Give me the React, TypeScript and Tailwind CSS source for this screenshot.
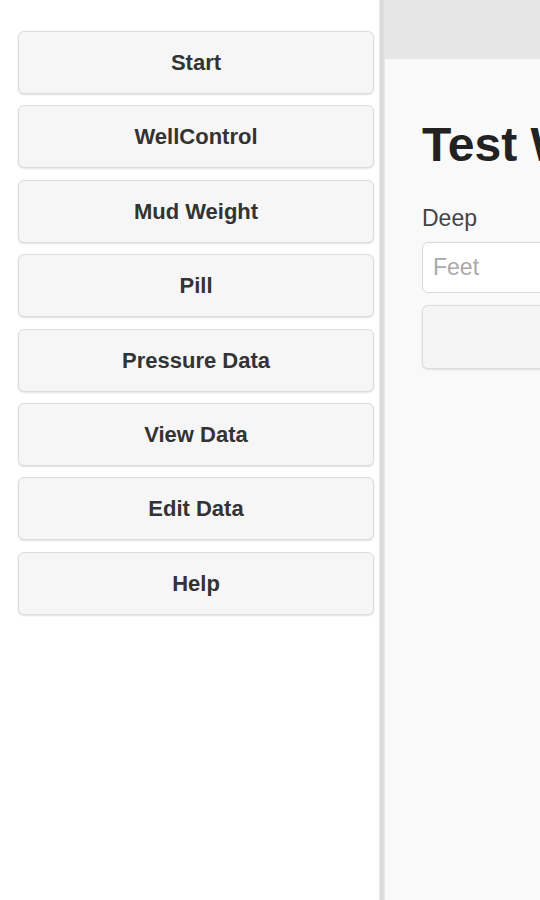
import React from 'react';

const menuItems = ['Start', 'WellControl', 'Mud Weight', 'Pill', 'Pressure Data', 'View Data', 'Edit Data', 'Help'];

export default function App() {
  return (
    <div className="flex h-[900px] w-[540px] overflow-hidden bg-white font-['Liberation_Sans',Arial,sans-serif]">
      {/* left menu */}
      <div className="w-[379px] shrink-0 bg-white pt-[31px] pl-[18px] pr-[5px]">
        <div className="flex flex-col gap-[11.4px]">
          {menuItems.map((item) => (
            <button
              key={item}
              className="h-[63px] w-full rounded-[6px] border border-[#dcdcdc] bg-[#f6f6f6] text-[22px] font-bold text-[#333] shadow-[0_1px_2px_rgba(0,0,0,0.12)]"
            >
              {item}
            </button>
          ))}
        </div>
      </div>

      {/* divider */}
      <div className="w-[6px] shrink-0 bg-gradient-to-r from-[#e8e8e8] via-[#d6d6d6] to-[#ececec]" />

      {/* right page */}
      <div className="flex min-w-0 flex-1 flex-col overflow-hidden bg-[#f9f9f9]">
        <div className="h-[59px] shrink-0 bg-[#e6e6e6]" />
        <div className="w-[500px] pl-[37px] pt-[62px]">
          <h1 className="whitespace-nowrap text-[48px] font-bold leading-none text-[#222]">Test Well</h1>
          <div className="mt-[35px] text-[23px] leading-[28px] text-[#444]">Deep</div>
          <div className="mt-[10px] flex h-[51px] items-center rounded-[6px] border border-[#d8d8d8] bg-white pl-[10px] text-[23px] text-[#aaa]">
            Feet
          </div>
          <div className="mt-[12px] h-[64px] rounded-[6px] border border-[#dcdcdc] bg-[#f5f5f5] shadow-[0_1px_2px_rgba(0,0,0,0.1)]" />
        </div>
      </div>
    </div>
  );
}
